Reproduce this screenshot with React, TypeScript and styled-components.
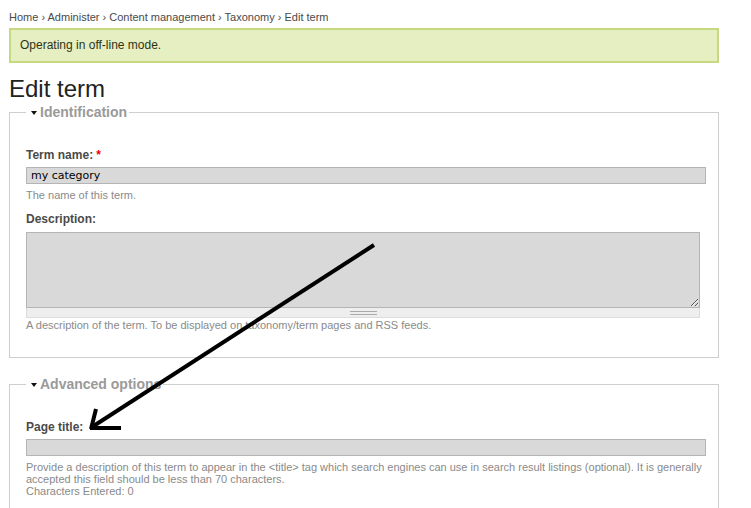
import styled, { createGlobalStyle } from "styled-components";

const GlobalStyle = createGlobalStyle`
  html, body {
    margin: 0;
    padding: 0;
    background: #fff;
  }
  body {
    font-family: "Liberation Sans", Arial, sans-serif;
  }
`;

const Page = styled.div`
  position: relative;
  width: 710px;
  padding: 10px 32px 0 9px;
  height: 498px;
  overflow: hidden;
`;

const Breadcrumb = styled.div`
  font-size: 11px;
  line-height: 14px;
  color: #4a4a4a;
`;

const Message = styled.div`
  margin-top: 4px;
  padding: 8px 9px;
  border: 2px solid #c6d880;
  background: #e6efc2;
  color: #2e3318;
  font-size: 12px;
  line-height: 15px;
`;

const Title = styled.h1`
  margin: 12px 0 0;
  font-size: 24px;
  line-height: 28px;
  font-weight: normal;
  color: #222;
`;

const Fieldset = styled.fieldset<{ $gap?: number }>`
  margin: ${(p) => p.$gap ?? 0}px 0 0;
  padding: 26px 11px 25px 16px;
  border: 1px solid #cfcfcf;
  min-width: 0;
`;

const Legend = styled.legend`
  padding: 0 2px 0 5px;
  font-size: 14px;
  line-height: 18px;
  font-weight: bold;
  color: #9a9a9a;
  display: flex;
  align-items: center;
  gap: 3px;
`;

const Caret = styled.span`
  display: inline-block;
  width: 0;
  height: 0;
  border-left: 3.5px solid transparent;
  border-right: 3.5px solid transparent;
  border-top: 4px solid #111;
  margin-top: 1px;
`;

const Label = styled.label<{ $top?: number }>`
  display: block;
  margin-top: ${(p) => p.$top ?? 0}px;
  font-size: 12px;
  line-height: 16px;
  font-weight: bold;
  color: #4a4a4a;
`;

const Required = styled.span`
  color: #e00;
  margin-left: 3px;
`;

const TextInput = styled.input`
  display: block;
  box-sizing: border-box;
  width: 680px;
  height: 17px;
  margin: 4px 0 0;
  padding: 0 4px;
  border: 1px solid #b5b5b5;
  background: #d9d9d9;
  font-family: "DejaVu Sans", "Lucida Grande", sans-serif;
  font-size: 11px;
  color: #000;
  outline: none;
`;

const Area = styled.textarea`
  display: block;
  box-sizing: border-box;
  width: 674px;
  height: 76px;
  margin: 5px 0 0;
  border: 1px solid #b5b5b5;
  background: #d9d9d9;
  resize: both;
  outline: none;
`;

const Grippie = styled.div`
  box-sizing: border-box;
  width: 674px;
  height: 10px;
  background: #eee;
  border: 1px solid #ddd;
  border-top: none;
  display: flex;
  justify-content: center;
  align-items: center;
`;

const GripLines = styled.span`
  display: block;
  width: 27px;
  height: 2px;
  border-top: 1px solid #aaa;
  border-bottom: 1px solid #aaa;
`;

const Help = styled.div<{ $top?: number; $lh?: number }>`
  margin-top: ${(p) => p.$top ?? 0}px;
  font-size: 11px;
  line-height: ${(p) => p.$lh ?? 14}px;
  color: #8a8a8a;
`;

const Arrow = styled.svg`
  position: absolute;
  left: 0;
  top: 0;
  pointer-events: none;
`;

export default function App() {
  return (
    <>
      <GlobalStyle />
      <Page>
        <Breadcrumb>
          Home › Administer › Content management › Taxonomy › Edit term
        </Breadcrumb>
        <Message>Operating in off-line mode.</Message>
        <Title>Edit term</Title>

        <Fieldset>
          <Legend>
            <Caret />
            Identification
          </Legend>
          <Label>
            Term name:<Required>*</Required>
          </Label>
          <TextInput defaultValue="my category" />
          <Help $top={4}>The name of this term.</Help>
          <Label $top={9}>Description:</Label>
          <Area />
          <Grippie>
            <GripLines />
          </Grippie>
          <Help>
            A description of the term. To be displayed on taxonomy/term pages and RSS feeds.
          </Help>
        </Fieldset>

        <Fieldset $gap={17}>
          <Legend>
            <Caret />
            Advanced options
          </Legend>
          <Label>Page title:</Label>
          <TextInput />
          <Help $top={5} $lh={12}>
            Provide a description of this term to appear in the &lt;title&gt; tag which search
            engines can use in search result listings (optional). It is generally accepted this
            field should be less than 70 characters.
            <br />
            Characters Entered: 0
          </Help>
        </Fieldset>

        <Arrow width="751" height="508" viewBox="0 0 751 508">
          <g stroke="#000" strokeWidth="4" strokeLinecap="butt" fill="none">
            <line x1="374" y1="245" x2="92" y2="427" />
            <line x1="91" y1="429" x2="96" y2="409" />
            <line x1="90" y1="428" x2="121" y2="428" />
          </g>
        </Arrow>
      </Page>
    </>
  );
}
